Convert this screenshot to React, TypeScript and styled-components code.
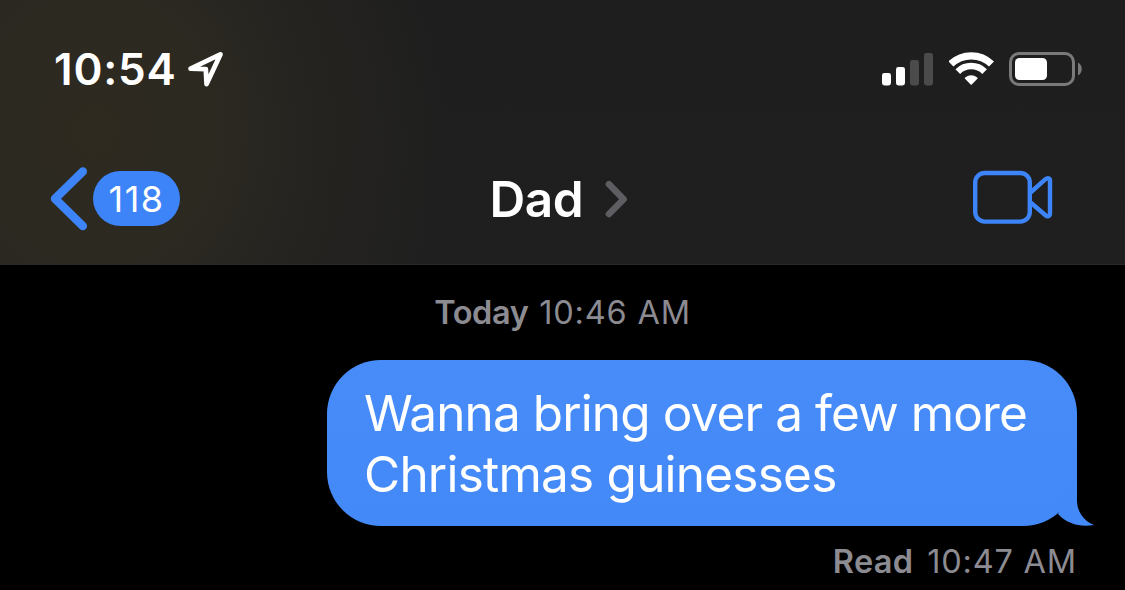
import React from "react";
import styled, { createGlobalStyle } from "styled-components";

const GlobalStyle = createGlobalStyle`
  * { box-sizing: border-box; }
  body { margin: 0; background: #000; font-family: Inter, "Liberation Sans", sans-serif; }
`;

const Screen = styled.main`
  width: 1125px;
  height: 590px;
  overflow: hidden;
  background: #000;
  color: #fff;
`;

const Header = styled.header`
  height: 265px;
  border-bottom: 1px solid #29292a;
  background:
    radial-gradient(ellipse 350px 400px at 95px 130px, #2e2a20 0%, #2c2921 32%, rgba(40, 38, 33, 0.7) 62%, rgba(31, 31, 31, 0) 100%),
    linear-gradient(#1e1e1e, #1f1f1f);
`;

const StatusBar = styled.div`
  display: flex;
  justify-content: space-between;
  align-items: center;
  height: 138px;
  padding: 0 42px 0 54px;
`;

const StatusGroup = styled.div<{ $gap: number }>`
  display: flex;
  align-items: center;
  gap: ${(p) => p.$gap}px;
`;

const Clock = styled.span`
  width: 121px;
  white-space: nowrap;
  font-size: 44px;
  font-weight: 600;
  letter-spacing: 0.8px;
  line-height: 52px;
`;

const NavBar = styled.nav`
  display: grid;
  grid-template-columns: 1fr auto 1fr;
  align-items: center;
  height: 121px;
  padding: 0 72px 0 50px;
`;

const BackButton = styled.button`
  display: flex;
  align-items: center;
  gap: 5px;
  justify-self: start;
  padding: 0;
  border: 0;
  background: none;
  font: inherit;
`;

const UnreadBadge = styled.span`
  width: 87px;
  height: 55px;
  border-radius: 28px;
  background: #3d84f8;
  color: #fff;
  font-size: 36px;
  letter-spacing: 1.4px;
  line-height: 56px;
  text-align: center;
`;

const Contact = styled.div`
  display: flex;
  align-items: center;
  gap: 21px;
  padding-left: 15px;
`;

const ContactName = styled.h1`
  margin: 0;
  width: 94px;
  white-space: nowrap;
  font-size: 49.5px;
  font-weight: 600;
  letter-spacing: -0.5px;
  line-height: 60px;
`;

const VideoButton = styled.button`
  display: flex;
  justify-self: end;
  padding: 0 0 3px;
  border: 0;
  background: none;
`;

const Thread = styled.section`
  display: flex;
  flex-direction: column;
  padding: 28px 48px 0;
`;

const Caption = styled.p<{ $align: "center" | "flex-end" }>`
  align-self: ${(p) => p.$align};
  margin: 0;
  color: #8c8b91;
  font-size: 32.5px;
  letter-spacing: 0.8px;
  line-height: 40px;
  white-space: nowrap;
`;

const CaptionLabel = styled.strong<{ $spacing: number; $gap: number }>`
  margin-right: ${(p) => p.$gap}px;
  font-weight: 600;
  letter-spacing: ${(p) => p.$spacing}px;
`;

const Bubble = styled.div`
  position: relative;
  align-self: flex-end;
  width: 750px;
  height: 166px;
  margin: 27px 0 16px;
  padding: 23px 37px;
  border-radius: 54px;
  background: linear-gradient(#478cf9, #4389f7);
  font-size: 49.5px;
  line-height: 61px;
  white-space: nowrap;
`;

const MessageLine = styled.span<{ $spacing: number }>`
  display: block;
  letter-spacing: ${(p) => p.$spacing}px;
`;

const Tail = styled.svg`
  position: absolute;
  right: -17px;
  bottom: 0;
`;

const LocationIcon = () => (
  <svg width="36" height="36" viewBox="0 0 36 36" fill="none" stroke="#fff" strokeWidth="4.8" strokeLinejoin="round">
    <path d="M2.6 17.6 32.4 3.4 18.6 33 17.8 18.2Z" />
  </svg>
);

const SignalIcon = () => (
  <svg width="52" height="33" viewBox="0 0 52 33">
    <rect x="0" y="20" width="9" height="12.5" rx="2.4" fill="#fff" />
    <rect x="14" y="14" width="9" height="18.5" rx="2.4" fill="#fff" />
    <rect x="28" y="7" width="9" height="25.5" rx="2.4" fill="#4b4b4b" />
    <rect x="42" y="0" width="9" height="32.5" rx="2.4" fill="#4b4b4b" />
  </svg>
);

const WifiIcon = () => (
  <svg width="46" height="34" viewBox="0 0 46 34" fill="none" stroke="#fff">
    <path strokeWidth="7.2" d="M1.9 12A29.2 29.2 0 0 1 42.5 12" />
    <path strokeWidth="6.6" d="M8.8 19.6A19 19 0 0 1 35.6 19.6" />
    <path fill="#fff" strokeWidth="1.6" strokeLinejoin="round" d="M16.6 26.2A9.6 9.6 0 0 1 27.8 26.2L22.2 32Z" />
  </svg>
);

const BatteryIcon = () => (
  <svg width="74" height="34" viewBox="0 0 74 34">
    <rect x="1.5" y="1.5" width="63" height="31" rx="8.5" fill="none" stroke="#7a7a7a" strokeWidth="3" />
    <rect x="6" y="6" width="32" height="22" rx="4.5" fill="#fff" />
    <path d="M69 10.5C74 13 74 21 69 23.5Z" fill="#7a7a7a" />
  </svg>
);

const BackIcon = () => (
  <svg width="38" height="64" viewBox="0 0 38 64" fill="none" stroke="#3d84f8" strokeWidth="8.5" strokeLinecap="round" strokeLinejoin="round">
    <path d="M32.8 4.5 5 31.8 32.8 59" />
  </svg>
);

const DetailsIcon = () => (
  <svg width="24" height="38" viewBox="0 0 24 38" fill="none" stroke="#5e5e62" strokeWidth="6.6" strokeLinecap="round" strokeLinejoin="round">
    <path d="M4 4.2 18.6 19.2 4 34" />
  </svg>
);

const VideoIcon = () => (
  <svg width="80" height="54" viewBox="0 0 80 54" fill="none" stroke="#3d84f8" strokeWidth="4.4" strokeLinejoin="round">
    <rect x="2.2" y="3" width="54.6" height="48.6" rx="9.5" />
    <path d="M57 23 72.5 9.2C74.5 7.5 77 8 77 10.5V43.5C77 46.5 74.5 47 72.5 45.3L57 32" />
  </svg>
);

export default function App() {
  return (
    <>
      <GlobalStyle />
      <Screen>
        <Header>
          <StatusBar>
            <StatusGroup $gap={13}>
              <Clock>10:54</Clock>
              <LocationIcon />
            </StatusGroup>
            <StatusGroup $gap={14.5}>
              <SignalIcon />
              <WifiIcon />
              <BatteryIcon />
            </StatusGroup>
          </StatusBar>
          <NavBar>
            <BackButton aria-label="Back">
              <BackIcon />
              <UnreadBadge>118</UnreadBadge>
            </BackButton>
            <Contact>
              <ContactName>Dad</ContactName>
              <DetailsIcon />
            </Contact>
            <VideoButton aria-label="Video call">
              <VideoIcon />
            </VideoButton>
          </NavBar>
        </Header>
        <Thread>
          <Caption $align="center">
            <CaptionLabel $spacing={-0.4} $gap={1}>Today</CaptionLabel> 10:46 AM
          </Caption>
          <Bubble>
            <MessageLine $spacing={-0.9}>Wanna bring over a few more</MessageLine>
            <MessageLine $spacing={-0.78}>Christmas guinesses</MessageLine>
            <Tail width="36" height="57" viewBox="0 0 36 57" fill="#4389f7">
              <path d="M19 3V31C19 43 26 52 36 56C23 58.5 9 55 0 45Z" />
            </Tail>
          </Bubble>
          <Caption $align="flex-end">
            <CaptionLabel $spacing={0.3} $gap={4}>Read</CaptionLabel> 10:47 AM
          </Caption>
        </Thread>
      </Screen>
    </>
  );
}
